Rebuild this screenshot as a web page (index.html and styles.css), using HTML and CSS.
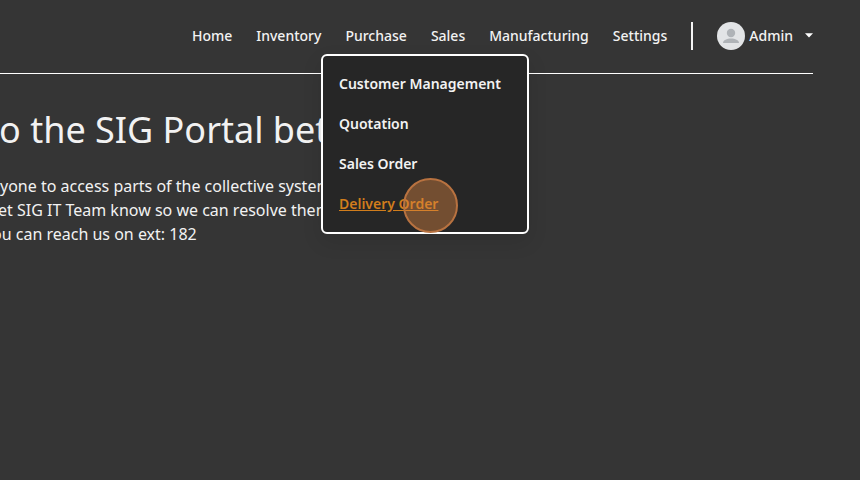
FILE: index.html
```html
<!DOCTYPE html>
<html lang="en">
<head>
<meta charset="utf-8">
<title>SIG Portal</title>
<link rel="stylesheet" href="styles.css">
</head>
<body>
<header class="header">
  <nav class="nav">
    <a>Home</a>
    <a>Inventory</a>
    <a>Purchase</a>
    <a>Sales</a>
    <a>Manufacturing</a>
    <a>Settings</a>
  </nav>
  <span class="divider"></span>
  <div class="account">
    <svg class="avatar" viewBox="0 0 28 28"><circle cx="14" cy="14" r="14" fill="#e2e4e6"/><circle cx="14" cy="11" r="4.2" fill="#afb3b7"/><path d="M6 21c0-3 4-4.500 8-4.500s8 1.500 8 4.500z" fill="#afb3b7"/></svg>
    <span>Admin</span>
    <svg class="caret" viewBox="0 0 8 5"><path d="M0 .3h8L4 4.600z" fill="#fff"/></svg>
  </div>
</header>
<main class="content">
  <h1>o the SIG Portal bet</h1>
  <p class="line first">yone to access parts of the collective system</p>
  <p class="line second">et SIG IT Team know so we can resolve them</p>
  <p class="line third">ou can reach us on ext: 182</p>
</main>
<div class="menu">
  <a>Customer Management</a>
  <a>Quotation</a>
  <a>Sales Order</a>
  <a class="active">Delivery Order</a>
</div>
<span class="pointer"></span>
</body>
</html>
```
FILE: styles.css
```css
* { box-sizing: border-box; }
body {
  margin: 0;
  width: 860px;
  height: 480px;
  overflow: hidden;
  background: #353535;
  color: #f2f2f2;
  font-family: "Noto Sans", sans-serif;
}
.header {
  display: flex;
  justify-content: flex-end;
  align-items: center;
  width: 813px;
  height: 74px;
  padding-bottom: 2px;
  border-bottom: 1px solid #fff;
  font-size: 14px;
  font-weight: 500;
  line-height: 20px;
}
.nav { display: flex; gap: 24px; }
.divider { width: 2px; height: 28px; margin: 0 24px; background: #f4f4f4; }
.account { display: flex; align-items: center; }
.avatar { width: 28px; height: 28px; margin-right: 4px; }
.caret { width: 8px; height: 5px; margin-left: 12px; }
.content { white-space: nowrap; padding-top: 32px; }
h1 { margin: 0 0 20px -1px; font-size: 36px; line-height: 48px; font-weight: 400; }
.line { margin: 0; font-size: 16px; line-height: 24px; }
.second { margin-left: -2px; }
.third { margin-left: -8px; }
.menu {
  position: absolute;
  left: 321px;
  top: 54px;
  width: 208px;
  height: 180px;
  padding: 8px 16px;
  border: 2px solid #fff;
  border-radius: 6px;
  background: #262626;
  box-shadow: 0 8px 20px rgba(0, 0, 0, .1);
  font-size: 14px;
  font-weight: 600;
}
.menu a { display: block; line-height: 40px; }
.menu .active { color: #d17d1c; text-decoration: underline; }
.pointer {
  position: absolute;
  left: 403px;
  top: 178px;
  width: 55px;
  height: 55px;
  border: 2px solid #b87240;
  border-radius: 50%;
  background: rgba(217, 131, 64, .43);
}
```
